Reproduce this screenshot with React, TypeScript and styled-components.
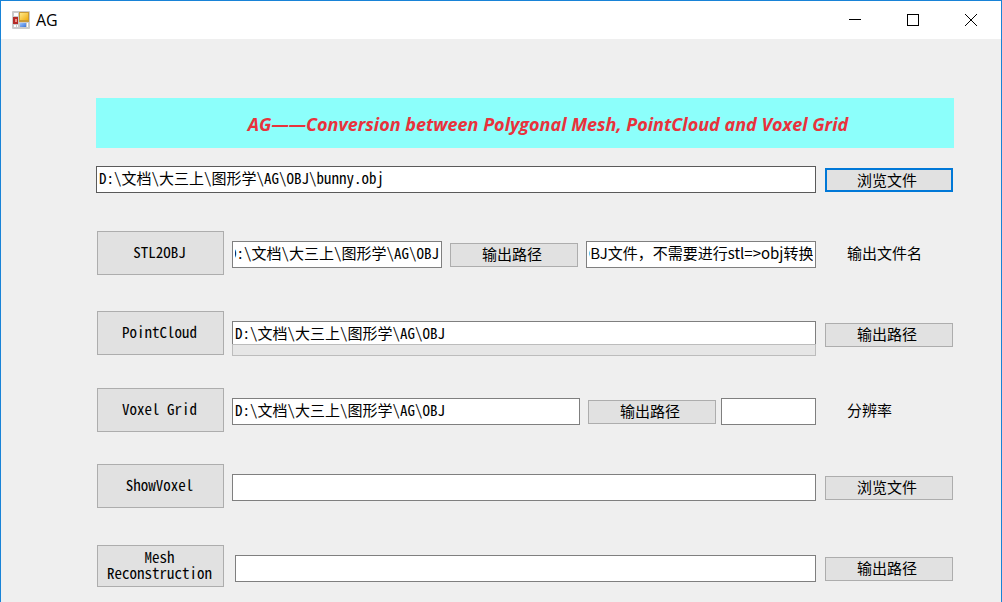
import React, { useLayoutEffect, useRef } from "react";
import styled, { createGlobalStyle } from "styled-components";

const GlobalStyle = createGlobalStyle`
  *, *::before, *::after { box-sizing: border-box; }
  body { margin: 0; background: #efefef; }
`;

const songFont = `"Noto Sans CJK SC", sans-serif`;

const Window = styled.div`
  min-height: 100vh;
  border: 1px solid #1883d7;
  border-bottom: 0;
  background: #efefef;
  color: #000;
  font-family: ${songFont};
  font-size: 15px;
  font-feature-settings: "hwid";
`;

const TitleBar = styled.header`
  display: flex;
  align-items: center;
  height: 38px;
  padding: 0 1px 0 11px;
  background: #fff;
`;

const Caption = styled.h1`
  flex: 1;
  margin: 0 0 0 6px;
  padding-bottom: 1px;
  font: 400 16px/20px "Open Sans", sans-serif;
`;

const CaptionButton = styled.button`
  display: grid;
  place-items: center;
  width: 58px;
  height: 38px;
  padding: 0;
  border: 0;
  background: transparent;
`;

const Form = styled.main`
  padding: 59px 47px 15px 95px;
`;

const Banner = styled.h2`
  display: flex;
  align-items: center;
  justify-content: center;
  height: 50px;
  margin: 0;
  padding: 2px 0 0 46px;
  background: #8cfffb;
  color: #e8323c;
  font: italic 700 18px/24px "Open Sans", sans-serif;
  white-space: nowrap;
`;

const SourceRow = styled.div`
  display: flex;
  align-items: center;
  gap: 9px;
  margin-top: 18px;
  padding-right: 1px;
`;

const Row = styled.div<{ $gap: number }>`
  display: flex;
  align-items: flex-start;
  margin-top: ${(p) => p.$gap}px;
  padding: 0 1px;
`;

const ActionButton = styled.button<{ $height?: number }>`
  flex: none;
  width: 127px;
  height: ${(p) => p.$height ?? 44}px;
  padding: 0 2px 3px 0;
  border: 1px solid #adadad;
  background: #e1e1e1;
  color: #000;
  font: inherit;
  font-feature-settings: inherit;
  line-height: 16px;
`;

const Fields = styled.div<{ $indent?: number }>`
  display: flex;
  flex: 1;
  align-items: flex-start;
  gap: 8px;
  min-width: 0;
  margin: 10px 9px 0 ${(p) => p.$indent ?? 8}px;
`;

const Stack = styled.div`
  display: flex;
  flex: 1;
  flex-direction: column;
`;

const TextBox = styled.input<{ $basis?: number; $strong?: boolean; $flush?: boolean; $fullWidth?: boolean }>`
  flex: ${(p) => (p.$basis ? `0 0 ${p.$basis}px` : "1 1 0")};
  min-width: 0;
  height: 27px;
  padding: 0 2px 5px;
  border: 1px solid ${(p) => (p.$strong ? "#5a5a5a" : "#7f7f7f")};
  border-radius: 0;
  outline: 0;
  background: #fff;
  color: #000;
  font: inherit;
  line-height: 20px;
  font-feature-settings: ${(p) => (p.$fullWidth ? "normal" : "inherit")};
  ${(p) => p.$flush && "flex: none; height: 23px; padding-bottom: 2px; border-bottom: 0;"}
`;

const Progress = styled.div`
  height: 12px;
  border: 1px solid #bcbcbc;
  background: #e6e6e6;
`;

const SmallButton = styled.button<{ $focused?: boolean; $drop?: boolean }>`
  flex: none;
  width: 128px;
  height: 24px;
  margin-top: ${(p) => (p.$drop ? 12 : 0)}px;
  padding: 0 4px 2px 0;
  border: ${(p) => (p.$focused ? "2px solid #0078d7" : "1px solid #adadad")};
  background: #e1e1e1;
  color: #000;
  font: inherit;
  line-height: 20px;
`;

const InnerButton = styled(SmallButton)<{ $tight?: boolean }>`
  margin-top: 2px;
  margin-right: ${(p) => (p.$tight ? -3 : 0)}px;
`;

const SideLabel = styled.label`
  flex: none;
  width: 128px;
  padding: 12px 0 0 22px;
  line-height: 20px;
`;

function AppIcon() {
  return (
    <svg width="18" height="18" viewBox="0 0 18 18" aria-hidden="true">
      <defs>
        <linearGradient id="gold" x2="1" y2="1">
          <stop stopColor="#ffe98a" />
          <stop offset="1" stopColor="#f0ae12" />
        </linearGradient>
        <linearGradient id="blue" x2="1" y2="1">
          <stop stopColor="#9cc4ff" />
          <stop offset="1" stopColor="#3d75d8" />
        </linearGradient>
      </defs>
      <rect width="18" height="18" rx="1" fill="#cbcbcb" />
      <path d="M2 2h4v3H2zM2 14h2v2H2zM5 14h1v2H5zM15 12h1v4h-1z" fill="#fff" />
      <rect x="7" y="1" width="10" height="10" fill="#c99a35" />
      <rect x="8" y="2" width="8" height="7" fill="url(#gold)" />
      <rect x="1" y="6" width="5" height="7" fill="#b52a26" />
      <rect x="3" y="8" width="2" height="3" fill="#ee9289" />
      <rect x="8" y="12" width="6" height="4" fill="url(#blue)" />
    </svg>
  );
}

type PathBoxProps = React.ComponentProps<typeof TextBox>;

/* Text box that keeps the end of a long value in view. */
function TailBox(props: PathBoxProps) {
  const ref = useRef<HTMLInputElement>(null);
  useLayoutEffect(() => {
    const scroll = () => {
      if (ref.current) ref.current.scrollLeft = ref.current.scrollWidth;
    };
    scroll();
    document.fonts.ready.then(scroll);
  }, []);
  return <TextBox ref={ref} {...props} />;
}

export default function App() {
  return (
    <Window>
      <GlobalStyle />
      <TitleBar>
        <AppIcon />
        <Caption>AG</Caption>
        <CaptionButton aria-label="Minimize">
          <svg width="12" height="12" shapeRendering="crispEdges"><path d="M0 5.500h12" stroke="#000" /></svg>
        </CaptionButton>
        <CaptionButton aria-label="Maximize">
          <svg width="12" height="12" shapeRendering="crispEdges"><path d="M.5.5h11v11H.5z" fill="none" stroke="#000" /></svg>
        </CaptionButton>
        <CaptionButton aria-label="Close">
          <svg width="12" height="12"><path d="M0 0l12 12M12 0L0 12" stroke="#000" /></svg>
        </CaptionButton>
      </TitleBar>
      <Form>
        <Banner>AG——Conversion between Polygonal Mesh, PointCloud and Voxel Grid</Banner>
        <SourceRow>
          <TextBox $strong aria-label="Source file" defaultValue={"D:\\文档\\大三上\\图形学\\AG\\OBJ\\bunny.obj"} />
          <SmallButton $focused>浏览文件</SmallButton>
        </SourceRow>
        <Row $gap={38}>
          <ActionButton>STL2OBJ</ActionButton>
          <Fields>
            <TailBox $basis={210} aria-label="STL2OBJ path" defaultValue={"D:\\文档\\大三上\\图形学\\AG\\OBJ"} />
            <InnerButton>输出路径</InnerButton>
            <TailBox $fullWidth id="output-name" defaultValue="OBJ文件，不需要进行stl=>obj转换" />
          </Fields>
          <SideLabel htmlFor="output-name">输出文件名</SideLabel>
        </Row>
        <Row $gap={36}>
          <ActionButton>PointCloud</ActionButton>
          <Fields>
            <Stack>
              <TextBox $flush aria-label="PointCloud path" defaultValue={"D:\\文档\\大三上\\图形学\\AG\\OBJ"} />
              <Progress role="progressbar" aria-label="Conversion progress" aria-valuenow={0} />
            </Stack>
          </Fields>
          <SmallButton $drop>输出路径</SmallButton>
        </Row>
        <Row $gap={32}>
          <ActionButton>Voxel Grid</ActionButton>
          <Fields>
            <TextBox aria-label="Voxel Grid path" defaultValue={"D:\\文档\\大三上\\图形学\\AG\\OBJ"} />
            <InnerButton $tight>输出路径</InnerButton>
            <TextBox $basis={95} id="resolution" />
          </Fields>
          <SideLabel htmlFor="resolution">分辨率</SideLabel>
        </Row>
        <Row $gap={32}>
          <ActionButton>ShowVoxel</ActionButton>
          <Fields>
            <TextBox aria-label="Voxel file" />
          </Fields>
          <SmallButton $drop>浏览文件</SmallButton>
        </Row>
        <Row $gap={37}>
          <ActionButton $height={42}>
            Mesh
            <br />
            Reconstruction
          </ActionButton>
          <Fields $indent={11}>
            <TextBox aria-label="Reconstruction path" />
          </Fields>
          <SmallButton $drop>输出路径</SmallButton>
        </Row>
      </Form>
    </Window>
  );
}
